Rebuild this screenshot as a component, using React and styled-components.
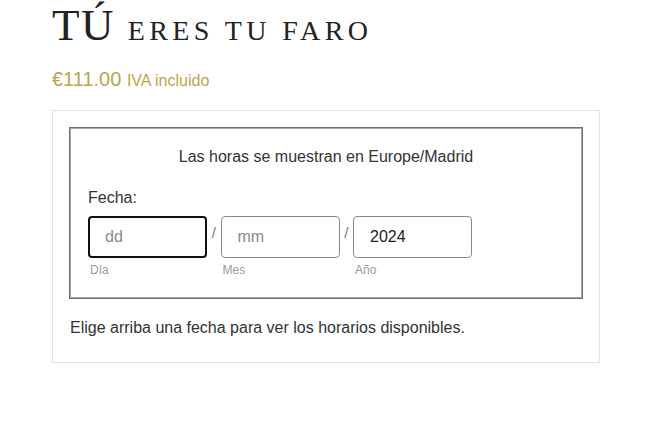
import React from "react";
import styled, { createGlobalStyle } from "styled-components";

const Global = createGlobalStyle`
  html, body { margin: 0; padding: 0; background: #fff; }
  body { font-family: "Liberation Sans", Arial, sans-serif; color: #333; }
`;

const Page = styled.div`
  padding: 0 68px 0 52px;
  width: 548px;
`;

const Title = styled.h1`
  margin: 0;
  padding-top: 3px;
  font-family: "Liberation Serif", "DejaVu Serif", serif;
  font-weight: 400;
  font-size: 45px;
  line-height: 44px;
  letter-spacing: 1.5px;
  color: #222;
  text-transform: uppercase;
  white-space: nowrap;
`;

const Small = styled.span`
  font-size: 28px;
  letter-spacing: 4.4px;
`;

const Price = styled.p`
  margin: 14px 0 17px;
  font-size: 20px;
  line-height: 24px;
  color: #b7a64f;
`;

const Tax = styled.span`
  font-size: 16px;
`;

const Card = styled.div`
  border: 1px solid #e2e2e2;
  padding: 16px 16px 24px;
`;

const Field = styled.fieldset`
  margin: 0;
  padding: 17px 18px 21px;
  border: 1px solid #6e6e6e;
  box-shadow: inset 0 0 0 1px #a8a8a8;
`;

const Note = styled.p`
  margin: 0 0 19px;
  text-align: center;
  font-size: 16px;
  line-height: 24px;
`;

const Label = styled.div`
  font-size: 16px;
  line-height: 20px;
  margin-bottom: 8px;
`;

const Row = styled.div`
  display: flex;
  align-items: flex-start;
`;

const Group = styled.div`
  display: flex;
  flex-direction: column;
`;

const Input = styled.div`
  box-sizing: border-box;
  width: 119px;
  height: 42px;
  border: ${(p) => (p.$focus ? "2px solid #111" : "1px solid #8a8a8a")};
  border-radius: 4px;
  padding-left: ${(p) => (p.$focus ? "15px" : "16px")};
  display: flex;
  align-items: center;
  font-size: 16px;
  color: ${(p) => (p.$value ? "#222" : "#8a8a8a")};
`;

const Sub = styled.span`
  font-size: 12px;
  line-height: 14px;
  color: #9a9a9a;
  margin-top: 5px;
  padding-left: 2px;
`;

const Slash = styled.span`
  width: 13.5px;
  text-align: center;
  font-size: 15px;
  color: #777;
  padding-top: 8px;
`;

const Footer = styled.p`
  margin: 19px 0 0 1px;
  font-size: 16px;
  line-height: 20px;
  color: #333;
`;

export default function App() {
  return (
    <Page>
      <Global />
      <Title>
        TÚ <Small>eres tu faro</Small>
      </Title>
      <Price>
        €111.00 <Tax>IVA incluido</Tax>
      </Price>
      <Card>
        <Field>
          <Note>Las horas se muestran en Europe/Madrid</Note>
          <Label>Fecha:</Label>
          <Row>
            <Group>
              <Input $focus>dd</Input>
              <Sub>Día</Sub>
            </Group>
            <Slash>/</Slash>
            <Group>
              <Input>mm</Input>
              <Sub>Mes</Sub>
            </Group>
            <Slash>/</Slash>
            <Group>
              <Input $value>2024</Input>
              <Sub>Año</Sub>
            </Group>
          </Row>
        </Field>
        <Footer>Elige arriba una fecha para ver los horarios disponibles.</Footer>
      </Card>
    </Page>
  );
}
